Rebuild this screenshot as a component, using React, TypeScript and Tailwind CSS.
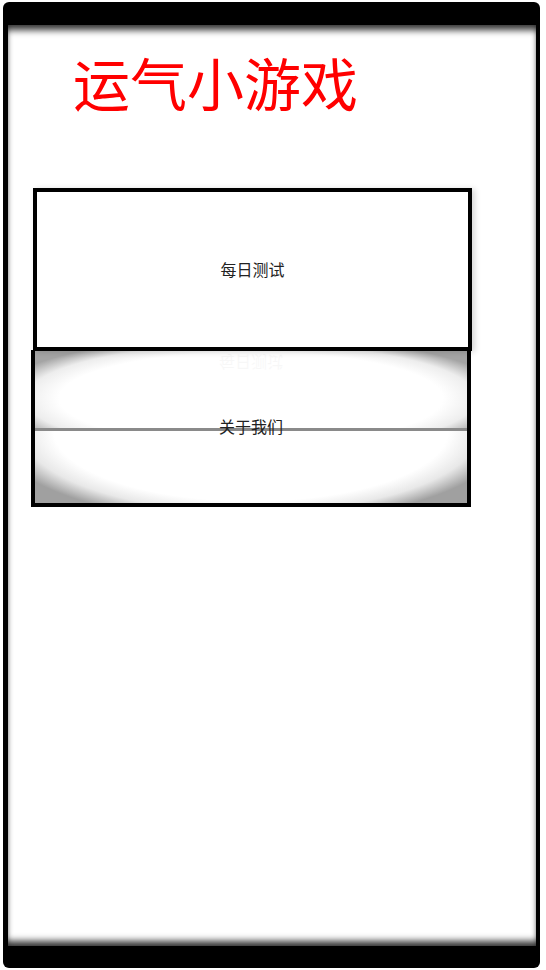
import React from "react";

const cjk = "font-['Noto_Sans_CJK_SC','Noto_Sans',sans-serif]";

export default function App() {
  return (
    <div className={`w-[546px] h-[970px] bg-white pt-[2px] pl-[3px] ${cjk}`}>
      {/* phone frame */}
      <div className="w-[537px] h-[966px] bg-black rounded-[6px] pt-[23px] pb-[22px] pl-[5px] pr-[4px]">
        <div className="relative h-full bg-white flex flex-col shadow-[inset_0_8px_7px_-3px_rgba(0,0,0,0.8),inset_0_-8px_7px_-3px_rgba(0,0,0,0.8)]">
          <h1 className="mt-[28px] ml-[65px] text-[57px] leading-none text-[#ff0000]">
            运气小游戏
          </h1>

          {/* 每日测试 */}
          <div className="mt-[78px] ml-[25px] w-[439px] h-[163px] border-[4px] border-black bg-white shadow-[3px_1px_6px_rgba(0,0,0,0.16)] flex items-center justify-center relative z-10">
            <span className="text-[16px] text-[#222] mt-[-1px]">每日测试</span>
          </div>

          {/* 关于我们 */}
          <div className="-mt-[1px] ml-[23px] w-[440px] h-[157px] border-[4px] border-black border-t-0 grid">
            <div className="col-start-1 row-start-1 flex flex-col">
              <div className="h-[78px] bg-[radial-gradient(ellipse_60%_80%_at_50%_62%,#ffffff_74%,#ededed_87%,#a4a4a4_100%)]" />
              <div className="h-[3px] bg-[#8a8a8a]" />
              <div className="flex-1 bg-[radial-gradient(ellipse_60%_128%_at_50%_0%,#ffffff_76%,#e8e8e8_88%,#a0a0a0_100%)]" />
            </div>
            <div className="col-start-1 row-start-1 flex items-start justify-center pt-[1px]">
              <span className="text-[16px] text-[#333] opacity-[0.03] scale-y-[-1]">每日测试</span>
            </div>
            <div className="col-start-1 row-start-1 flex items-center justify-center">
              <span className="text-[16px] text-[#222] mb-[2px]">关于我们</span>
            </div>
          </div>
        </div>
      </div>
    </div>
  );
}
